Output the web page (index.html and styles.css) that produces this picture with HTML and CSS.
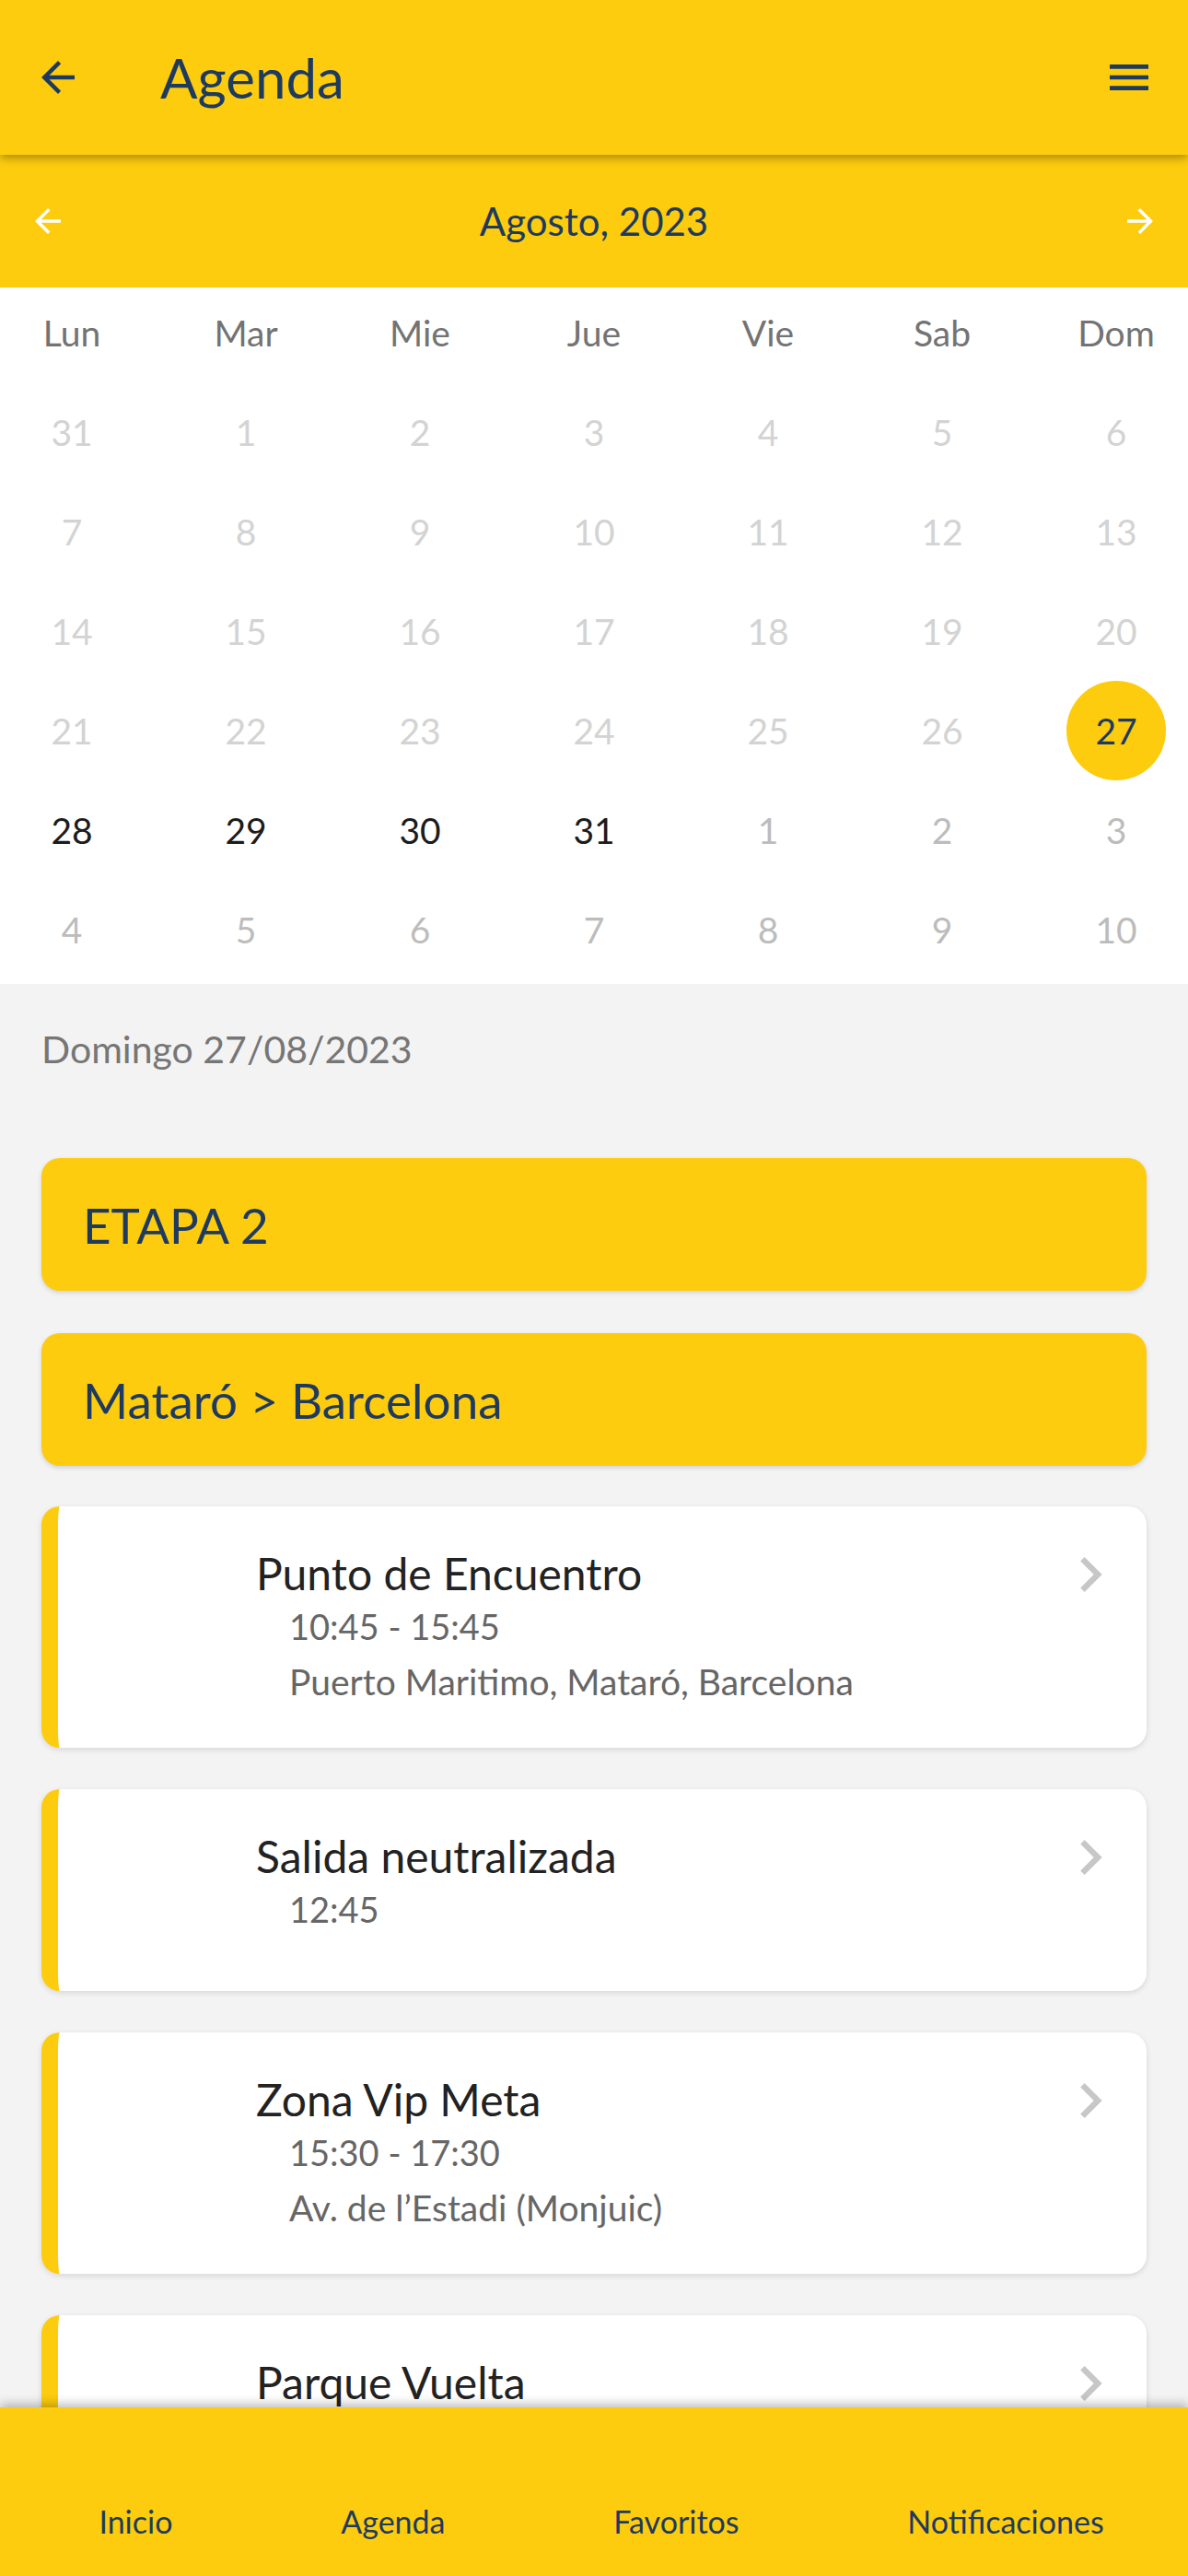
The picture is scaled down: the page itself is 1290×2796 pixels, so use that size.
FILE: index.html
```html
<!DOCTYPE html>
<html lang="es">
<head>
    <meta charset="UTF-8">
    <meta name="viewport" content="width=device-width, initial-scale=1.0">
    <title>Agenda</title>
    <link rel="stylesheet" href="styles.css">
</head>
<body>
<div class="app">

    <header class="topbar">
        <svg class="icon-back" viewBox="0 0 24 24"><path d="M20 11H7.83l5.59-5.59L12 4l-8 8 8 8 1.41-1.41L7.83 13H20v-2z"/></svg>
        <h1 class="title">Agenda</h1>
        <svg class="icon-menu" viewBox="0 0 24 24"><path d="M3 18h18v-2H3v2zm0-5h18v-2H3v2zm0-7v2h18V6H3z"/></svg>
    </header>

    <div class="month-bar">
        <svg class="month-arrow" viewBox="0 0 24 24"><path d="M20 11H7.83l5.59-5.59L12 4l-8 8 8 8 1.41-1.41L7.83 13H20v-2z"/></svg>
        <span class="month">Agosto, 2023</span>
        <svg class="month-arrow" viewBox="0 0 24 24"><path d="M4 11h12.17l-5.59-5.59L12 4l8 8-8 8-1.41-1.41L16.17 13H4v-2z"/></svg>
    </div>

    <section class="calendar">
        <div class="week weekdays">
            <span>Lun</span><span>Mar</span><span>Mie</span><span>Jue</span><span>Vie</span><span>Sab</span><span>Dom</span>
        </div>
        <div class="week">
            <span class="day past">31</span><span class="day past">1</span><span class="day past">2</span><span class="day past">3</span><span class="day past">4</span><span class="day past">5</span><span class="day past">6</span>
        </div>
        <div class="week">
            <span class="day past">7</span><span class="day past">8</span><span class="day past">9</span><span class="day past">10</span><span class="day past">11</span><span class="day past">12</span><span class="day past">13</span>
        </div>
        <div class="week">
            <span class="day past">14</span><span class="day past">15</span><span class="day past">16</span><span class="day past">17</span><span class="day past">18</span><span class="day past">19</span><span class="day past">20</span>
        </div>
        <div class="week">
            <span class="day past">21</span><span class="day past">22</span><span class="day past">23</span><span class="day past">24</span><span class="day past">25</span><span class="day past">26</span><span class="day selected">27</span>
        </div>
        <div class="week">
            <span class="day">28</span><span class="day">29</span><span class="day">30</span><span class="day">31</span><span class="day other">1</span><span class="day other">2</span><span class="day other">3</span>
        </div>
        <div class="week">
            <span class="day other">4</span><span class="day other">5</span><span class="day other">6</span><span class="day other">7</span><span class="day other">8</span><span class="day other">9</span><span class="day other">10</span>
        </div>
    </section>

    <main class="agenda">
        <p class="date">Domingo 27/08/2023</p>

        <div class="banner">ETAPA 2</div>
        <div class="banner">Mataró &gt; Barcelona</div>

        <div class="event">
            <div class="event-thumb"></div>
            <div class="event-body">
                <div class="event-title">Punto de Encuentro</div>
                <div class="event-time">10:45 - 15:45</div>
                <div class="event-place">Puerto Maritimo, Mataró, Barcelona</div>
            </div>
            <svg class="chevron" viewBox="0 0 24 24"><path d="M10 6L8.59 7.41 13.17 12l-4.58 4.59L10 18l6-6z"/></svg>
        </div>

        <div class="event">
            <div class="event-thumb"></div>
            <div class="event-body">
                <div class="event-title">Salida neutralizada</div>
                <div class="event-time">12:45</div>
            </div>
            <svg class="chevron" viewBox="0 0 24 24"><path d="M10 6L8.59 7.41 13.17 12l-4.58 4.59L10 18l6-6z"/></svg>
        </div>

        <div class="event">
            <div class="event-thumb"></div>
            <div class="event-body">
                <div class="event-title">Zona Vip Meta</div>
                <div class="event-time">15:30 - 17:30</div>
                <div class="event-place">Av. de l’Estadi (Monjuic)</div>
            </div>
            <svg class="chevron" viewBox="0 0 24 24"><path d="M10 6L8.59 7.41 13.17 12l-4.58 4.59L10 18l6-6z"/></svg>
        </div>

        <div class="event">
            <div class="event-thumb"></div>
            <div class="event-body">
                <div class="event-title">Parque Vuelta</div>
            </div>
            <svg class="chevron" viewBox="0 0 24 24"><path d="M10 6L8.59 7.41 13.17 12l-4.58 4.59L10 18l6-6z"/></svg>
        </div>
    </main>

    <nav class="tabbar">
        <span class="tab">Inicio</span>
        <span class="tab">Agenda</span>
        <span class="tab">Favoritos</span>
        <span class="tab">Notificaciones</span>
    </nav>

</div>
</body>
</html>
```

FILE: styles.css
```css
body {
    margin: 0;
    font-family: Lato, "Noto Sans", sans-serif;
    background-color: #f3f3f3;
}
.app {
    height: 100vh;
    display: flex;
    flex-direction: column;
    overflow: hidden;
}

/* top bar */
.topbar {
    height: 168px;
    flex-shrink: 0;
    display: flex;
    align-items: center;
    padding: 0 36px;
    background-color: #fdcc0e;
    box-shadow: 0 4px 9px rgba(0, 0, 0, 0.3);
    position: relative;
    z-index: 2;
}
.icon-back {
    width: 54px;
    height: 54px;
    fill: #1e3a5f;
}
.title {
    flex: 1;
    margin: 0 0 0 84px;
    font-size: 60px;
    font-weight: 400;
    line-height: 74px;
    color: #1e3a5f;
}
.icon-menu {
    width: 56px;
    height: 56px;
    fill: #1e3a5f;
}

/* month selector */
.month-bar {
    height: 144px;
    flex-shrink: 0;
    display: flex;
    align-items: center;
    justify-content: space-between;
    padding: 0 31px;
    background-color: #fdcc0e;
    position: relative;
    z-index: 1;
}
.month-arrow {
    width: 42px;
    height: 42px;
    fill: #fff;
}
.month {
    font-size: 42px;
    color: #1e3a5f;
}

/* calendar */
.calendar {
    flex-shrink: 0;
    background-color: #fff;
    padding-bottom: 5px;
}
.week {
    display: flex;
    justify-content: space-between;
    padding: 0 24px;
}
.week span {
    width: 108px;
    height: 108px;
    box-sizing: border-box;
    display: flex;
    align-items: center;
    justify-content: center;
    font-size: 39px;
    color: #1c1c1c;
    border-radius: 50%;
}
.weekdays span {
    height: 103px;
    padding-bottom: 5px;
    color: #737373;
}
.day.past {
    color: #d3d3d3;
}
.day.other {
    color: #bcbcbc;
}
.day.selected {
    background-color: #fdcc0e;
    color: #1e3a5f;
}

/* agenda list */
.agenda {
    flex: 1;
    overflow: hidden;
    padding: 0 45px;
}
.date {
    margin: 46px 0 93px;
    font-size: 41px;
    line-height: 50px;
    color: #767676;
}
.banner {
    height: 144px;
    display: flex;
    align-items: center;
    padding: 0 45px;
    margin-bottom: 46px;
    background-color: #fdcc0e;
    border-radius: 20px;
    box-shadow: 0 2px 5px rgba(0, 0, 0, 0.15);
    font-size: 53px;
    color: #1e3a5f;
}
.banner + .banner {
    margin-bottom: 44px;
}
.event {
    display: flex;
    box-sizing: border-box;
    min-height: 219px;
    padding: 43px 0 48px;
    margin-bottom: 45px;
    background-color: #fff;
    border-left: 18px solid #fdcc0e;
    border-radius: 20px;
    box-shadow: 0 2px 6px rgba(0, 0, 0, 0.12);
}
.event-thumb {
    width: 215px;
    flex-shrink: 0;
}
.event-body {
    flex: 1;
}
.event-title {
    font-size: 48px;
    line-height: 60px;
    color: #222;
}
.event-time {
    margin: 4px 0 0 36px;
    font-size: 38px;
    line-height: 47px;
    color: #666;
}
.event-place {
    margin: 13px 0 0 36px;
    font-size: 39px;
    line-height: 47px;
    color: #666;
}
.chevron {
    width: 76px;
    height: 76px;
    margin: -7px 23px 0 0;
    fill: #c7c7c7;
}

/* bottom tabs */
.tabbar {
    height: 183px;
    flex-shrink: 0;
    box-sizing: border-box;
    display: flex;
    justify-content: space-around;
    align-items: flex-start;
    padding: 103px 0 0 16px;
    background-color: #fdcc0e;
    box-shadow: 0 -4px 10px rgba(0, 0, 0, 0.25);
    position: relative;
    z-index: 2;
}
.tab {
    font-size: 34px;
    line-height: 42px;
    color: #1e3a5f;
}
```
